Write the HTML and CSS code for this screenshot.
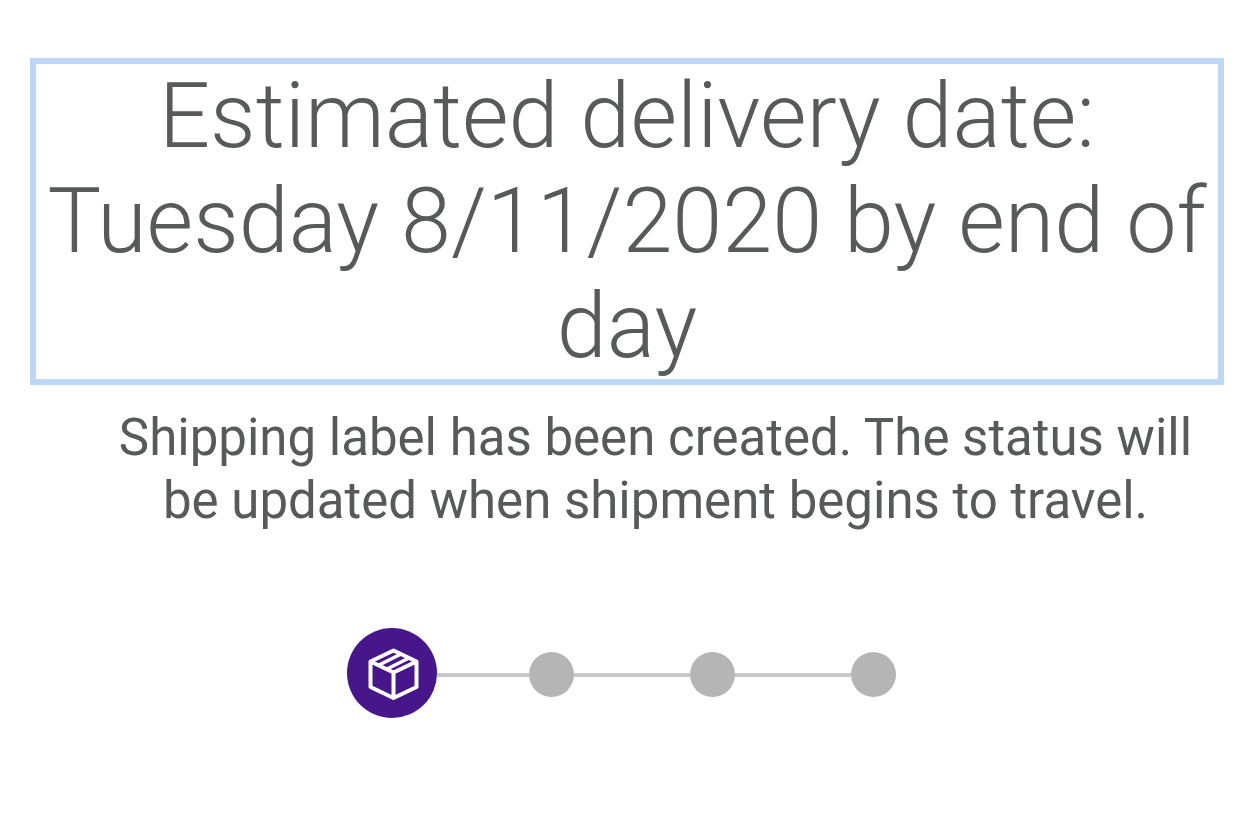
FILE: index.html
```
<!DOCTYPE html>
<html lang="en">
<head>
    <meta charset="UTF-8">
    <meta name="viewport" content="width=device-width, initial-scale=1.0">
    <title>Shipment Tracking</title>
    <link rel="stylesheet" href="styles.css">
</head>
<body>
    <main class="tracking">
        <h1 class="delivery-date" tabindex="-1">Estimated delivery date: Tuesday 8/11/2020 by end of day</h1>
        <p class="status">Shipping label has been created. The status will be updated when shipment begins to travel.</p>
        <ol class="progress" aria-label="Shipment progress">
            <li class="step active" aria-current="step">
                <svg class="package" viewBox="0 0 90 90" aria-hidden="true">
                    <path d="M46.5 22.5 L69.5 33.5 V59 L46.5 70 L23.5 59 V33.5 Z M23.5 33.5 L46.5 44.5 L69.5 33.5 M46.5 44.5 V70"/>
                    <path d="M31 37.5 L54 26 M39 41.5 L62 30" stroke-width="3.5"/>
                </svg>
            </li>
            <li class="step"></li>
            <li class="step"></li>
            <li class="step"></li>
        </ol>
    </main>
</body>
</html>
```
FILE: styles.css
```
:root {
    --text: #58595b;
    --focus: #bed7f9;
    --active: #47168a;
    --step: #b5b5b5;
    --line: #c9c9c9;
}

body {
    margin: 0;
    background: #ffffff;
    color: var(--text);
    font-family: Roboto, sans-serif;
}

.tracking {
    padding: 58px 0;
}

.delivery-date {
    margin: 0 18px 0 30px;
    padding: 0 8px;
    border: 6px solid var(--focus);
    font-size: 90px;
    font-weight: 300;
    line-height: 105px;
    text-align: center;
}

.status {
    margin: 21px 45px 0 114px;
    font-size: 51px;
    line-height: 63px;
    text-align: center;
}

.progress {
    display: flex;
    align-items: center;
    max-width: 549px;
    margin: 96px auto 0;
    padding: 0;
    list-style: none;
}

.step {
    display: flex;
    flex: 1;
    align-items: center;
    padding-top: 3px;
}

.step::before {
    content: "";
    flex: 1;
    height: 4px;
    background: var(--line);
}

.step::after {
    content: "";
    width: 45px;
    height: 45px;
    border-radius: 50%;
    background: var(--step);
}

/* the first connector starts under the active circle */
.step.active {
    position: relative;
    flex: none;
    margin-right: -23px;
    padding: 0;
    border-radius: 50%;
    background: var(--active);
}

.step.active::before,
.step.active::after {
    content: none;
}

.package {
    width: 90px;
    height: 90px;
    fill: none;
    stroke: #ffffff;
    stroke-width: 4;
    stroke-linejoin: round;
}
```
